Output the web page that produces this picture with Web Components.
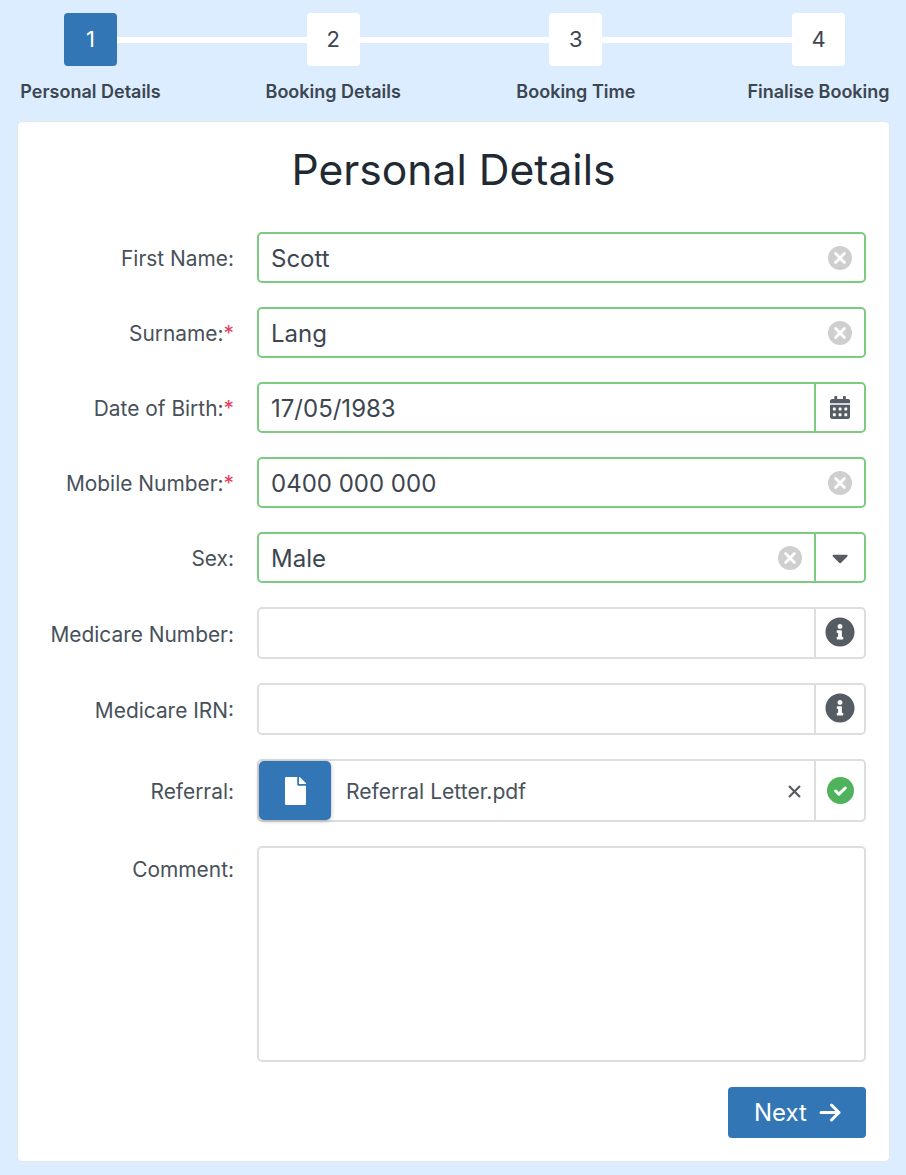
<!DOCTYPE html>
<html lang="en">
<head>
<meta charset="utf-8">
<title>Personal Details</title>
<style>
  html, body { margin: 0; background: #dbedfe; }
  body { font-family: Inter, "Noto Sans", sans-serif; color: #3d4650; }
</style>
</head>
<body>
<booking-page>
  <booking-steps>
    <booking-step num="1" label="Personal Details" active></booking-step>
    <booking-step num="2" label="Booking Details"></booking-step>
    <booking-step num="3" label="Booking Time"></booking-step>
    <booking-step num="4" label="Finalise Booking"></booking-step>
  </booking-steps>
  <form-card heading="Personal Details">
    <form-row label="First Name:"><text-field value="Scott" state="valid" clear></text-field></form-row>
    <form-row label="Surname:" required><text-field value="Lang" state="valid" clear></text-field></form-row>
    <form-row label="Date of Birth:" required><text-field value="17/05/1983" state="valid" addon="calendar"></text-field></form-row>
    <form-row label="Mobile Number:" required><text-field value="0400 000 000" state="valid" clear></text-field></form-row>
    <form-row label="Sex:"><text-field value="Male" state="valid" clear addon="caret"></text-field></form-row>
    <form-row label="Medicare Number:" tall><text-field addon="info" tall></text-field></form-row>
    <form-row label="Medicare IRN:" tall><text-field addon="info" tall></text-field></form-row>
    <form-row label="Referral:"><file-field name="Referral Letter.pdf"></file-field></form-row>
    <form-row label="Comment:" top><comment-box></comment-box></form-row>
    <next-button slot="footer">Next</next-button>
  </form-card>
</booking-page>

<script>
// FontAwesome-style solid icons, drawn inline
const ICONS = {
  calendar: [448, "M0 464c0 26.5 21.5 48 48 48h352c26.5 0 48-21.5 48-48V192H0v272zm320-196c0-6.6 5.4-12 12-12h40c6.6 0 12 5.4 12 12v40c0 6.6-5.4 12-12 12h-40c-6.6 0-12-5.4-12-12v-40zm0 128c0-6.6 5.4-12 12-12h40c6.6 0 12 5.4 12 12v40c0 6.6-5.4 12-12 12h-40c-6.6 0-12-5.4-12-12v-40zM192 268c0-6.6 5.4-12 12-12h40c6.6 0 12 5.4 12 12v40c0 6.6-5.4 12-12 12h-40c-6.6 0-12-5.4-12-12v-40zm0 128c0-6.6 5.4-12 12-12h40c6.6 0 12 5.4 12 12v40c0 6.6-5.4 12-12 12h-40c-6.6 0-12-5.4-12-12v-40zM64 268c0-6.6 5.4-12 12-12h40c6.6 0 12 5.4 12 12v40c0 6.6-5.4 12-12 12H76c-6.6 0-12-5.4-12-12v-40zm0 128c0-6.6 5.4-12 12-12h40c6.6 0 12 5.4 12 12v40c0 6.6-5.4 12-12 12H76c-6.6 0-12-5.4-12-12v-40zM400 64h-48V16c0-8.8-7.2-16-16-16h-32c-8.8 0-16 7.2-16 16v48H160V16c0-8.8-7.2-16-16-16h-32c-8.8 0-16 7.2-16 16v48H48C21.5 64 0 85.5 0 112v48h448v-48c0-26.5-21.5-48-48-48z"],
  info: [512, "M256 8C119.043 8 8 119.083 8 256c0 136.997 111.043 248 248 248s248-111.003 248-248C504 119.083 392.957 8 256 8zm0 110c23.196 0 42 18.804 42 42s-18.804 42-42 42-42-18.804-42-42 18.804-42 42-42zm56 254c0 6.627-5.373 12-12 12h-88c-6.627 0-12-5.373-12-12v-24c0-6.627 5.373-12 12-12h12v-64h-12c-6.627 0-12-5.373-12-12v-24c0-6.627 5.373-12 12-12h64c6.627 0 12 5.373 12 12v100h12c6.627 0 12 5.373 12 12v24z"],
  file: [384, "M224 136V0H24C10.7 0 0 10.7 0 24v464c0 13.3 10.7 24 24 24h336c13.3 0 24-10.7 24-24V160H248c-13.2 0-24-10.8-24-24zm160-14.1v6.1H256V0h6.1c6.4 0 12.5 2.5 17 7l97.9 98c4.5 4.5 7 10.6 7 16.9z"],
  caret: [320, "M31.3 192h257.3c17.8 0 26.7 21.5 14.1 34.1L174.1 354.8c-7.8 7.8-20.5 7.8-28.3 0L17.2 226.1C4.6 213.5 13.5 192 31.3 192z"]
};
const svg = (name, size, color) => {
  const [w, d] = ICONS[name];
  return `<svg width="${size * w / 512}" height="${size}" viewBox="0 0 ${w} 512" fill="${color}" aria-hidden="true"><path d="${d}"/></svg>`;
};
const clearIcon = `<svg width="24" height="24" viewBox="0 0 24 24" aria-hidden="true"><circle cx="12" cy="12" r="12" fill="#cfcfcf"/><path d="M7.6 7.6l8.8 8.8M16.4 7.6l-8.8 8.8" stroke="#fff" stroke-width="2.8" stroke-linecap="round"/></svg>`;
const okIcon = `<svg width="27" height="27" viewBox="0 0 27 27" aria-hidden="true"><circle cx="13.5" cy="13.5" r="13.5" fill="#4fb35c"/><path d="M8.6 14l3.3 3.2 6.4-6.2" fill="none" stroke="#fff" stroke-width="3" stroke-linecap="round" stroke-linejoin="round"/></svg>`;

class BookingPage extends HTMLElement {
  constructor() { super(); this.attachShadow({ mode: "open" }); }
  connectedCallback() {
    this.shadowRoot.innerHTML = `
      <style>
        :host{display:flex;flex-direction:column;box-sizing:border-box;width:906px;height:1175px;padding:13px 16px 13px 17px}
      </style>
      <slot></slot>`;
  }
}

class BookingSteps extends HTMLElement {
  constructor() { super(); this.attachShadow({ mode: "open" }); }
  connectedCallback() {
    this.shadowRoot.innerHTML = `
      <style>
        :host{display:flex;align-items:flex-start;height:108px;padding:0 45px 0 47px}
        ::slotted(booking-step:not(:last-child)){flex:1}
      </style>
      <slot></slot>`;
  }
}

class BookingStep extends HTMLElement {
  constructor() { super(); this.attachShadow({ mode: "open" }); }
  connectedCallback() {
    const last = !this.nextElementSibling;
    this.shadowRoot.innerHTML = `
      <style>
        :host{display:flex;align-items:flex-start}
        .step{display:flex;flex-direction:column;align-items:center;width:53px;flex:none}
        .num{box-sizing:border-box;width:53px;height:53px;border-radius:4px;background:#fff;color:#3d4650;font-size:22px;display:flex;align-items:center;justify-content:center;padding-bottom:2px}
        :host([active]) .num{background:#3276b5;color:#fff}
        .label{margin-top:16px;font-size:18px;line-height:20px;font-weight:600;color:#3d4650;white-space:nowrap}
        .line{flex:1;height:6px;background:#fff;margin-top:24px}
      </style>
      <div class="step"><div class="num">${this.getAttribute("num")}</div><div class="label">${this.getAttribute("label")}</div></div>
      ${last ? "" : `<div class="line"></div>`}`;
  }
}

class FormCard extends HTMLElement {
  constructor() { super(); this.attachShadow({ mode: "open" }); }
  connectedCallback() {
    this.shadowRoot.innerHTML = `
      <style>
        :host{display:block;box-sizing:border-box;height:1041px;background:#fff;border:1px solid #e4e6e8;border-radius:5px;padding:0 23px 0 0}
        h1{margin:0 -23px 0 0;height:110px;padding-top:21px;box-sizing:border-box;text-align:center;font-size:42.6px;line-height:54px;font-weight:400;color:#212a33}
        .rows{display:flex;flex-direction:column;gap:24px}
        .foot{display:flex;justify-content:flex-end;margin-top:25px}
      </style>
      <h1>${this.getAttribute("heading")}</h1>
      <div class="rows"><slot></slot></div>
      <div class="foot"><slot name="footer"></slot></div>`;
  }
}

class FormRow extends HTMLElement {
  constructor() { super(); this.attachShadow({ mode: "open" }); }
  connectedCallback() {
    const star = this.hasAttribute("required") ? `<span class="req">*</span>` : "";
    this.shadowRoot.innerHTML = `
      <style>
        :host{display:grid;grid-template-columns:216px 1fr;column-gap:23px;align-items:center}
        :host([top]){align-items:start}
        .lbl{padding-top:2px;text-align:right;font-size:20.9px;line-height:26px;color:#48515a;white-space:nowrap}
        :host([top]) .lbl{padding-top:11px}
        :host([tall]) .lbl{padding-top:4px}
        .req{color:#e33d5c}
      </style>
      <div class="lbl">${this.getAttribute("label")}${star}</div>
      <slot></slot>`;
  }
}

class TextField extends HTMLElement {
  constructor() { super(); this.attachShadow({ mode: "open" }); }
  connectedCallback() {
    const value = this.getAttribute("value") || "";
    const addon = this.getAttribute("addon");
    const clear = this.hasAttribute("clear");
    const addonIcon = { calendar: svg("calendar", 23, "#565c63"), info: svg("info", 30, "#565c63"), caret: svg("caret", 26, "#565c63") }[addon];
    this.shadowRoot.innerHTML = `
      <style>
        :host{display:flex;box-sizing:border-box;height:51px;border:2px solid #dedede;border-radius:5px;background:#fff;overflow:hidden}
        :host([tall]){height:52px}
        :host([state=valid]){border-color:#7ccb81}
        .val{flex:1;padding-left:12px;font-size:24px;line-height:49px;height:47px;color:#3d4650;white-space:nowrap}
        .clr{display:flex;align-items:center;margin-right:12px}
        .addon{flex:none;box-sizing:border-box;width:50px;display:flex;align-items:center;justify-content:center;border-left:2px solid #dedede}
        :host([tall]) .addon svg{margin-bottom:2px}
        :host([state=valid]) .addon{border-left-color:#7ccb81}
      </style>
      <div class="val">${value}</div>
      ${clear ? `<div class="clr">${clearIcon}</div>` : ""}
      ${addon ? `<div class="addon">${addonIcon}</div>` : ""}`;
  }
}

class FileField extends HTMLElement {
  constructor() { super(); this.attachShadow({ mode: "open" }); }
  connectedCallback() {
    this.shadowRoot.innerHTML = `
      <style>
        :host{display:flex;align-items:stretch;box-sizing:border-box;height:63px;border:2px solid #dedede;border-radius:5px;background:#fff}
        .btn{flex:none;width:72px;background:#3276b5;border-radius:5px;display:flex;align-items:center;justify-content:center;box-shadow:0 1px 4px rgba(0,0,0,.28)}
        .name{flex:1;padding-left:15px;font-size:21.1px;line-height:62px;height:59px;color:#48515a;white-space:nowrap}
        .x{display:flex;align-items:center;margin-right:12px;padding-top:1px}
        .addon{flex:none;box-sizing:border-box;width:50px;display:flex;align-items:center;justify-content:center;border-left:2px solid #dedede}
        .addon svg{margin-bottom:1px}
      </style>
      <div class="btn">${svg("file", 28, "#fff")}</div>
      <div class="name">${this.getAttribute("name")}</div>
      <div class="x"><svg width="15" height="15" viewBox="0 0 15 15" stroke="#565c63" stroke-width="2.2" fill="none" aria-hidden="true"><path d="M2 2l11 11M13 2L2 13"/></svg></div>
      <div class="addon">${okIcon}</div>`;
  }
}

class CommentBox extends HTMLElement {
  constructor() { super(); this.attachShadow({ mode: "open" }); }
  connectedCallback() {
    this.shadowRoot.innerHTML = `
      <style>:host{display:block;box-sizing:border-box;height:216px;border:2px solid #dedede;border-radius:5px;background:#fff}</style>`;
  }
}

class NextButton extends HTMLElement {
  constructor() { super(); this.attachShadow({ mode: "open" }); }
  connectedCallback() {
    this.shadowRoot.innerHTML = `
      <style>
        :host{display:flex;align-items:center;box-sizing:border-box;width:138px;height:51px;padding-left:26px;gap:12px;background:#3276b5;border-radius:4px;color:#fff;font-size:24px}
      </style>
      <slot></slot>
      <svg width="22" height="19" viewBox="0 0 22 19" fill="none" stroke="#fff" stroke-width="3" stroke-linecap="round" stroke-linejoin="round" aria-hidden="true"><path d="M2 9.5h18M12.5 2l7.5 7.5-7.5 7.5"/></svg>`;
  }
}

customElements.define("booking-page", BookingPage);
customElements.define("booking-steps", BookingSteps);
customElements.define("booking-step", BookingStep);
customElements.define("form-card", FormCard);
customElements.define("form-row", FormRow);
customElements.define("text-field", TextField);
customElements.define("file-field", FileField);
customElements.define("comment-box", CommentBox);
customElements.define("next-button", NextButton);
</script>
</body>
</html>
